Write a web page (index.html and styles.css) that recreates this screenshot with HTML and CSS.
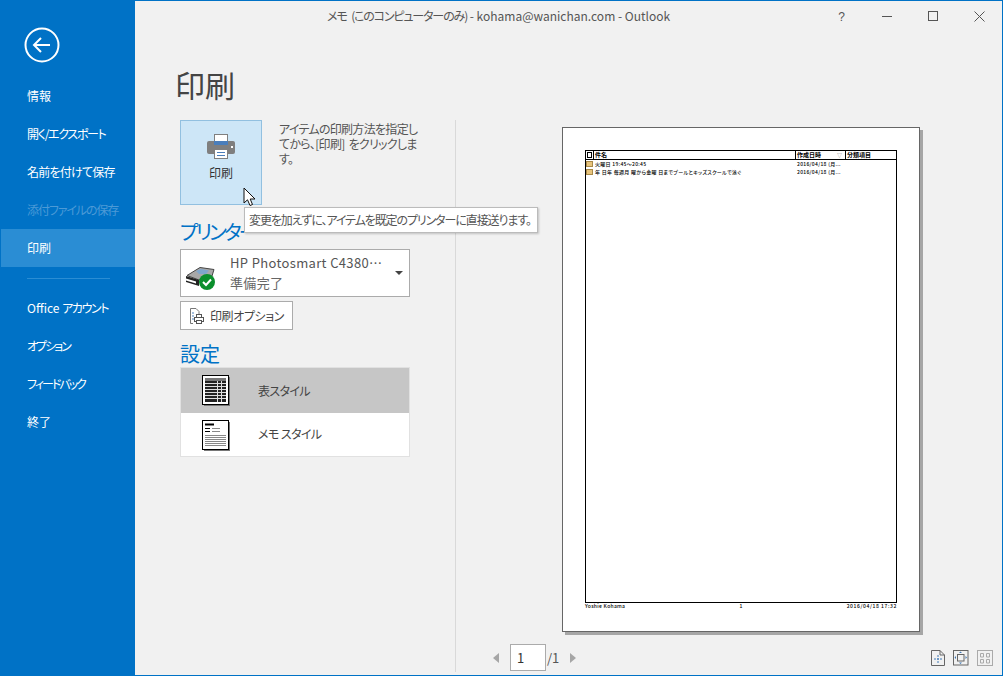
FILE: index.html
```html
<!DOCTYPE html>
<html lang="ja">
<head>
<meta charset="utf-8">
<title>Outlook 印刷</title>
<link rel="stylesheet" href="styles.css">
</head>
<body>
<div class="window">
  <nav class="sidebar">
    <div class="back">
      <svg width="36" height="36" viewBox="0 0 36 36"><circle cx="18" cy="18" r="16.5" fill="none" stroke="#fff" stroke-width="2"/><path d="M10 18H26M17 11L10 18L17 25" fill="none" stroke="#fff" stroke-width="2"/></svg>
    </div>
    <ul class="menu">
      <li>情報</li>
      <li class="tight-13">開く/エクスポート</li>
      <li class="tight-08">名前を付けて保存</li>
      <li class="disabled tight-11">添付ファイルの保存</li>
      <li class="active">印刷</li>
    </ul>
    <div class="menu-sep"></div>
    <ul class="menu">
      <li>Office <span class="tight-12">アカウント</span></li>
      <li class="tight-20">オプション</li>
      <li class="tight-20">フィードバック</li>
      <li>終了</li>
    </ul>
  </nav>
  <main class="main">
    <header class="titlebar">
      <div class="title"><span class="title-kana">メモ (このコンピューターのみ)</span> - kohama@wanichan.com - Outlook</div>
      <div class="controls">
        <span class="help">?</span>
        <svg width="11" height="11" viewBox="0 0 11 11"><path d="M0 5.500H10" stroke="#555" fill="none"/></svg>
        <svg width="11" height="11" viewBox="0 0 11 11"><rect x=".5" y=".5" width="9" height="9" stroke="#555" fill="none"/></svg>
        <svg width="11" height="11" viewBox="0 0 11 11"><path d="M.5 .5L10.500 10.500M10.500 .5L.5 10.500" stroke="#555" fill="none"/></svg>
      </div>
    </header>
    <h1 class="page-title">印刷</h1>
    <div class="columns">
      <section class="settings">
        <div class="print-row">
          <button class="print-btn">
            <svg width="28" height="25" viewBox="0 0 28 25">
              <rect x="7.500" y=".5" width="13" height="9" fill="#fff" stroke="#7f7f7f"/>
              <path d="M2 7H26Q28 7 28 9V18Q28 20 26 20H2Q0 20 0 18V9Q0 7 2 7Z" fill="#7f7f7f"/>
              <rect x="7" y="7" width="14" height="4" fill="#4a7ebb"/>
              <rect x="7.500" y="15.500" width="13" height="9" fill="#fff" stroke="#7f7f7f"/>
              <path d="M10 18.500H18M10 21.500H18" stroke="#4a7ebb"/>
              <rect x="24" y="12" width="2" height="2" fill="#fff"/>
            </svg>
            <span>印刷</span>
          </button>
          <p class="desc">アイテムの印刷方法を指定してから、[印刷] をクリックします。</p>
        </div>
        <h2 class="section-title printer-title">プリンター</h2>
        <div class="combo">
          <svg class="combo-icon" width="32" height="24" viewBox="0 0 32 24">
            <path d="M2 8.500L15 .5L29 2.500L27 9L14 13Z" fill="#a8a8a8" stroke="#444"/>
            <path d="M11 4L16 2L24 3.500L21 7L14 7Z" fill="#7fa6cc"/>
            <path d="M1 9L14 13V19L1 15Z" fill="#222"/>
            <path d="M1 11.500L11 14.500V16.500L1 13.500Z" fill="#fff"/>
            <circle cx="22" cy="15" r="8" fill="#0a8f2c"/>
            <path d="M18 15L21 18L26 12.500" fill="none" stroke="#fff" stroke-width="2"/>
          </svg>
          <div class="combo-text">
            <div class="combo-name">HP Photosmart C4380…</div>
            <div class="combo-status">準備完了</div>
          </div>
          <span class="caret"></span>
        </div>
        <button class="option-btn">
          <svg width="16" height="16" viewBox="0 0 16 16">
            <path d="M2.500 .5H8L11 3.500V6M2.500 .5V15.500H5" fill="none" stroke="#777"/>
            <path d="M4 5H6M4 8H6M4 11H6" stroke="#4a7ebb"/>
            <rect x="6.500" y="9.500" width="9" height="4" fill="#fff" stroke="#555"/>
            <rect x="8.500" y="6.500" width="5" height="3" fill="#fff" stroke="#555"/>
            <rect x="8.500" y="12.500" width="5" height="3" fill="#fff" stroke="#555"/>
          </svg>
          <span>印刷オプション</span>
        </button>
        <h2 class="section-title settings-title">設定</h2>
        <div class="styles">
          <div class="style-row selected">
            <svg class="thumb" width="28" height="31" viewBox="0 0 28 31">
              <rect x="2" y="2" width="26" height="29" fill="#777"/>
              <rect x=".5" y=".5" width="26" height="29" fill="#fff" stroke="#000"/>
              <rect x="3" y="3" width="21" height="24" fill="#222"/>
              <rect x="3" y="3" width="21" height="3" fill="#777"/>
              <path d="M3 8.500H24M3 11.500H24M3 14.500H24M3 17.500H24M3 20.500H24M3 23.500H24M15.500 6V27M19.500 6V27" stroke="#ddd"/>
            </svg>
            <span>表スタイル</span>
          </div>
          <div class="style-row memo-row">
            <svg class="thumb" width="28" height="31" viewBox="0 0 28 31">
              <rect x="2" y="2" width="26" height="29" fill="#777"/>
              <rect x=".5" y=".5" width="26" height="29" fill="#fff" stroke="#000"/>
              <path d="M3 4.500H12" stroke="#000" stroke-width="2"/>
              <path d="M3 8.500H8M3 11.500H8" stroke="#000"/>
              <path d="M10 8.500H18M10 11.500H18" stroke="#888"/>
              <path d="M3 15.500H24M3 17.500H24M3 19.500H24M3 21.500H24M3 23.500H24M3 25.500H24" stroke="#888"/>
            </svg>
            <span>メモ スタイル</span>
          </div>
        </div>
      </section>
      <section class="preview">
        <div class="sheet">
          <div class="sheet-table">
            <div class="sheet-head">
              <span class="c-icon"><i class="doc"></i></span>
              <span class="c-sub">件名</span>
              <span class="c-date">作成日時<em>▽</em></span>
              <span class="c-cat">分類項目</span>
            </div>
            <div class="sheet-row">
              <span class="c-icon"><i class="memo"></i></span>
              <span class="c-sub">火曜日 19:45～20:45</span>
              <span class="c-date">2016/04/18 (月...</span>
            </div>
            <div class="sheet-row">
              <span class="c-icon"><i class="memo"></i></span>
              <span class="c-sub">年 日年 毎週月 曜から金曜 日までプールとキッズスクールで泳ぐ</span>
              <span class="c-date">2016/04/18 (月...</span>
            </div>
          </div>
          <div class="sheet-foot">
            <span class="f-left">Yoshie Kohama</span>
            <span class="f-mid">1</span>
            <span class="f-right">2016/04/18 17:32</span>
          </div>
        </div>
        <div class="pager">
          <span class="arrow left"></span>
          <span class="page-input">1</span>
          <span class="page-total">/1</span>
          <span class="arrow right"></span>
          <div class="view-icons">
            <svg width="14" height="16" viewBox="0 0 14 16"><path d="M.5 .5H9L13.500 5V15.500H.5Z M9 .5V5H13.500" fill="none" stroke="#666"/><path d="M7 5V13M3 9H11" stroke="#3f78b5" stroke-dasharray="2 1"/></svg>
            <svg width="16" height="16" viewBox="0 0 16 16"><rect x=".5" y=".5" width="14.500" height="14.500" fill="none" stroke="#666"/><rect x="4.500" y="4.500" width="6.500" height="6.500" fill="none" stroke="#666"/><path d="M7.500 1.500L6 3H9ZM7.500 14L6 12.500H9ZM1.500 7.500L3 6V9ZM14 7.500L12.500 6V9Z" fill="#3f78b5"/></svg>
            <svg width="16" height="16" viewBox="0 0 16 16"><rect x=".5" y=".5" width="15" height="15" fill="none" stroke="#aaa"/><path d="M3.500 3.500H6.500V7H3.500ZM9.500 3.500H12.500V7H9.500ZM3.500 9.500H6.500V13H3.500ZM9.500 9.500H12.500V13H9.500Z" fill="none" stroke="#aaa"/></svg>
          </div>
        </div>
      </section>
    </div>
    <div class="tooltip">変更を加えずに、アイテムを既定のプリンターに直接送ります。</div>
    <svg class="cursor" width="14" height="21" viewBox="0 0 14 21"><path d="M1 1V16L4.500 12.800L7 18.500L9.500 17.500L7.200 12H12Z" fill="#fff" stroke="#111"/></svg>
  </main>
</div>
</body>
</html>
```
FILE: styles.css
```css
* { box-sizing: border-box; }
html, body { margin: 0; padding: 0; }
body {
  width: 1003px;
  height: 676px;
  overflow: hidden;
  font-family: "Noto Sans CJK JP", "Liberation Sans", sans-serif;
  font-feature-settings: "palt";
  font-size: 12px;
  color: #444;
}
.window {
  display: flex;
  width: 1003px;
  height: 676px;
  border: 1px solid #0072c6;
  background: #f1f1f1;
}
.sidebar {
  flex: 0 0 134px;
  background: #0072c6;
  color: #fff;
  display: flex;
  flex-direction: column;
}
.back { padding: 26px 0 0 23px; height: 76px; }
.back svg { display: block; }
.menu { list-style: none; margin: 0; padding: 0; }
.menu li {
  height: 38px;
  line-height: 38px;
  padding-left: 26px;
  font-size: 12px;
  white-space: nowrap;
}
.menu li.disabled { color: #4c9ad6; }
.menu li.active { background: #2a8dd4; }
.tight-08 { letter-spacing: -.75px; }
.tight-11 { letter-spacing: -1.1px; }
.tight-12 { letter-spacing: -1.4px; }
.tight-13 { letter-spacing: -1.3px; }
.tight-20 { letter-spacing: -2px; }
.menu-sep { height: 1px; margin: 11px 25px 10px 26px; background: #2a8dd4; }
.main { position: relative; flex: 1; display: flex; flex-direction: column; min-width: 0; }
.titlebar { position: relative; height: 30px; flex: none; }
.title { position: absolute; left: 192px; top: 6px; font-size: 12px; line-height: 18px; color: #555; white-space: nowrap; }
.title-kana { letter-spacing: -1.15px; word-spacing: 3px; }
.controls { position: absolute; right: 17px; top: 10px; display: flex; align-items: flex-start; gap: 35px; }
.controls svg { display: block; }
.help { width: 11px; font-size: 12px; line-height: 12px; margin-left: -4px; color: #555; font-family: "Liberation Sans", sans-serif; text-align: center; }
.page-title { margin: 0; padding-left: 40px; height: 89px; font-size: 30px; line-height: 48px; padding-top: 29px; font-weight: 400; color: #444; }
.columns { flex: 1; display: flex; min-height: 0; }
.settings { flex: 0 0 321px; height: 552px; padding-left: 45px; border-right: 1px solid #d9d9d9; }
.print-row { display: flex; height: 85px; }
.print-btn { flex: 0 0 82px; height: 85px; padding: 13px 0 0; margin: 0; border: 1px solid #92c0e0; background: #cde6f7; display: flex; flex-direction: column; align-items: center; font: inherit; color: #333; }
.print-btn svg { display: block; }
.print-btn span { margin-top: 5px; line-height: 18px; }
.desc { margin: 1px 0 0 17px; width: 142px; line-height: 15px; font-size: 12px; color: #555; letter-spacing: -.7px; word-spacing: 2px; }
.section-title { margin: 0; font-size: 20px; font-weight: 400; color: #0072c6; line-height: 28px; }
.printer-title { margin-top: 13px; height: 31px; letter-spacing: -2.8px; }
.combo { width: 230px; height: 48px; border: 1px solid #ababab; background: #fff; display: flex; align-items: center; position: relative; }
.combo-icon { margin: 11px 0 0 4px; flex: none; }
.combo-text { margin-left: 13px; font-size: 13px; line-height: 20px; color: #555; white-space: nowrap; letter-spacing: .35px; }
.combo-status { color: #666; }
.caret { position: absolute; right: 6px; top: 21px; border: 4px solid transparent; border-top: 4px solid #444; }
.option-btn { display: flex; align-items: center; gap: 6px; width: 113px; height: 29px; margin-top: 4px; padding: 0 0 0 7px; border: 1px solid #ababab; background: #fff; font: inherit; color: #444; white-space: nowrap; letter-spacing: -.4px; }
.option-btn svg { flex: none; }
.settings-title { margin-top: 10px; height: 27px; }
.styles { width: 230px; height: 90px; border: 1px solid #e1e1e1; background: #fff; }
.style-row { display: flex; align-items: center; height: 44px; padding-left: 21px; color: #444; letter-spacing: -.6px; }
.style-row.selected { background: #c6c6c6; height: 45px; }
.memo-row span { position: relative; top: -2px; }
.thumb { flex: none; }
.style-row span { margin-left: 28px; }
.preview { flex: 1; padding: 7px 0 0 106px; position: relative; }
.sheet { width: 358px; height: 505px; background: #fff; border: 1px solid #666; box-shadow: 3px 3px 0 #a6a6a6; padding: 22px 22px 0; font-size: 5px; line-height: 6px; color: #000; font-weight: 500; }
.sheet-table { width: 312px; height: 453px; border: 1px solid #000; }
.sheet-head { display: flex; height: 9px; border-bottom: 1px solid #000; font-weight: 700; font-size: 6px; }
.sheet-head span { border-right: 1px solid #000; line-height: 8px; }
.sheet-head span:last-child { border-right: 0; }
.sheet-row { display: flex; height: 8px; line-height: 8px; white-space: nowrap; letter-spacing: .3px; }
.c-icon { flex: 0 0 8px; display: flex; }
.c-sub { flex: 0 0 202px; padding-left: 1px; overflow: hidden; white-space: nowrap; }
.c-date { flex: 0 0 50px; padding-left: 1px; position: relative; white-space: nowrap; overflow: hidden; }
.c-date em { position: absolute; right: 3px; top: 0; font-size: 5px; font-style: normal; font-weight: 400; color: #888; }
.c-cat { flex: 1; padding-left: 1px; }
.doc { display: block; width: 5px; height: 6px; margin: 1px 0 0 1px; border: 1px solid #000; background: #fff; }
.memo { display: block; width: 7px; height: 6px; margin-top: 1px; background: #e8c47c; border: 1px solid #a98a4a; }
.sheet-foot { display: flex; width: 312px; line-height: 6px; letter-spacing: .3px; }
.f-left { flex: 1; }
.f-mid { flex: none; }
.f-right { flex: 1; text-align: right; letter-spacing: .6px; }
.pager { display: flex; align-items: center; height: 27px; margin: 12px 0 0 -69px; position: relative; width: 500px; }
.arrow { width: 0; height: 0; border: 5px solid transparent; }
.arrow.left { border-right: 6px solid #a6a6a6; border-left-width: 0; margin-right: 11px; }
.arrow.right { border-left: 6px solid #a6a6a6; border-right-width: 0; margin-left: 11px; }
.page-input { width: 36px; height: 27px; border: 1px solid #ababab; background: #fff; padding-left: 6px; line-height: 26px; font-size: 13px; color: #333; }
.page-total { font-size: 13px; color: #555; margin-left: 1px; }
.view-icons { margin-left: auto; display: flex; gap: 8px; }
.view-icons svg { display: block; }
.tooltip { position: absolute; left: 109px; top: 206px; width: 294px; height: 26px; padding-left: 4px; border: 1px solid #bbb; background: #fff; box-shadow: 1px 1px 2px rgba(0,0,0,.2); font-size: 12px; line-height: 24px; color: #555; white-space: nowrap; z-index: 2; letter-spacing: -1.1px; }
.cursor { position: absolute; left: 108px; top: 186px; z-index: 3; }
```
